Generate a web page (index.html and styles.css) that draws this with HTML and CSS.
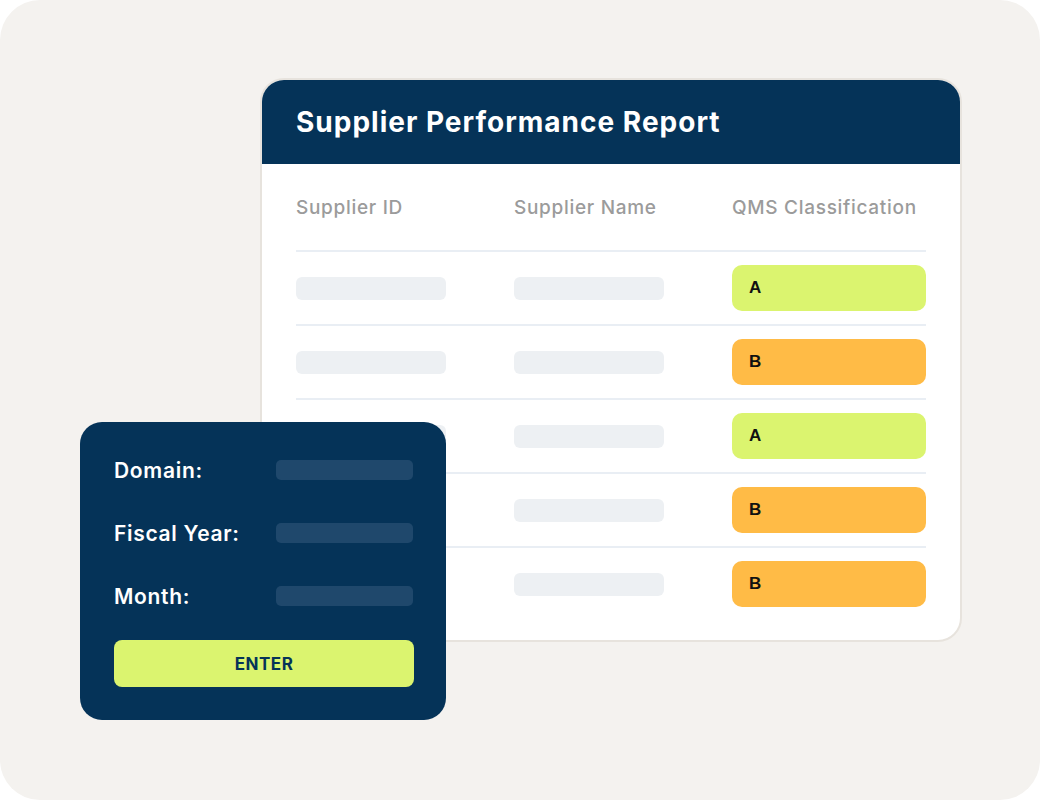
FILE: index.html
```html
<!DOCTYPE html>
<html lang="en">
<head>
  <meta charset="UTF-8" />
  <meta name="viewport" content="width=device-width, initial-scale=1.0"/>
  <title>Supplier Performance Report</title>
  <link rel="stylesheet" href="styles.css">
</head>
<body>

  <div class="frame">
    <div class="report">
      <div class="report-head">
        <h1>Supplier Performance Report</h1>
      </div>
      <div class="report-body">
        <div class="row row-head">
          <span>Supplier ID</span>
          <span>Supplier Name</span>
          <span>QMS Classification</span>
        </div>
        <div class="row">
          <div class="bar"></div>
          <div class="bar"></div>
          <div class="badge grade-a">A</div>
        </div>
        <div class="row">
          <div class="bar"></div>
          <div class="bar"></div>
          <div class="badge grade-b">B</div>
        </div>
        <div class="row">
          <div class="bar"></div>
          <div class="bar"></div>
          <div class="badge grade-a">A</div>
        </div>
        <div class="row">
          <div class="bar"></div>
          <div class="bar"></div>
          <div class="badge grade-b">B</div>
        </div>
        <div class="row">
          <div class="bar"></div>
          <div class="bar"></div>
          <div class="badge grade-b">B</div>
        </div>
      </div>
    </div>

    <div class="filter">
      <div class="field">
        <label>Domain:</label>
        <div class="input"></div>
      </div>
      <div class="field">
        <label>Fiscal Year:</label>
        <div class="input"></div>
      </div>
      <div class="field">
        <label>Month:</label>
        <div class="input"></div>
      </div>
      <button class="enter">ENTER</button>
    </div>
  </div>

</body>
</html>
```

FILE: styles.css
```css
body {
  margin: 0;
  padding: 0;
  background: #fff;
  font-family: 'Inter', 'Lato', sans-serif;
}

.frame {
  position: relative;
  height: 800px;
  background: #f4f2ef;
  border-radius: 40px;
  padding: 78px 0 0 260px;
  box-sizing: border-box;
  overflow: hidden;
}

.report {
  width: 702px;
  border: 2px solid #e7e3dd;
  border-radius: 24px;
  background: #fff;
  overflow: hidden;
  box-sizing: border-box;
}

.report-head {
  background: #053358;
  height: 84px;
  padding: 0 34px;
  display: flex;
  align-items: center;
}

.report-head h1 {
  margin: 0;
  color: #fff;
  font-size: 28px;
  font-weight: 700;
  letter-spacing: 1px;
}

.report-body {
  padding: 0 34px 20px;
}

.row {
  display: grid;
  grid-template-columns: 218px 218px 194px;
  align-items: center;
  height: 72px;
  border-bottom: 2px solid #e9eef4;
}

.row:last-child {
  border-bottom: none;
}

.row-head {
  height: 86px;
  color: #9b9b9b;
  font-size: 19px;
  font-weight: 500;
  letter-spacing: 0.7px;
}

.bar {
  width: 150px;
  height: 23px;
  background: #edf0f3;
  border-radius: 6px;
}

.badge {
  height: 46px;
  border-radius: 10px;
  display: flex;
  align-items: center;
  padding-left: 17px;
  font-family: 'Liberation Sans', Arial, sans-serif;
  font-weight: 700;
  font-size: 17px;
  color: #111;
}

.grade-a {
  background: #dbf46f;
}

.grade-b {
  background: #ffbb46;
}

.filter {
  position: absolute;
  left: 80px;
  top: 422px;
  width: 366px;
  height: 298px;
  box-sizing: border-box;
  background: #053358;
  border-radius: 22px;
  padding: 37px 33px 0 34px;
}

.field {
  display: flex;
  align-items: center;
  justify-content: space-between;
  height: 22px;
  margin-bottom: 41px;
}

.field label {
  color: #fff;
  font-size: 21px;
  font-weight: 600;
  letter-spacing: 0.7px;
}

.input {
  width: 137px;
  height: 20px;
  background: #1f486c;
  border-radius: 5px;
}

.enter {
  display: block;
  width: 300px;
  height: 47px;
  margin-top: -8px;
  border: none;
  border-radius: 8px;
  background: #dbf46f;
  color: #053358;
  font-family: 'Inter', sans-serif;
  font-weight: 700;
  font-size: 17px;
  letter-spacing: 0.5px;
  cursor: pointer;
}
```
